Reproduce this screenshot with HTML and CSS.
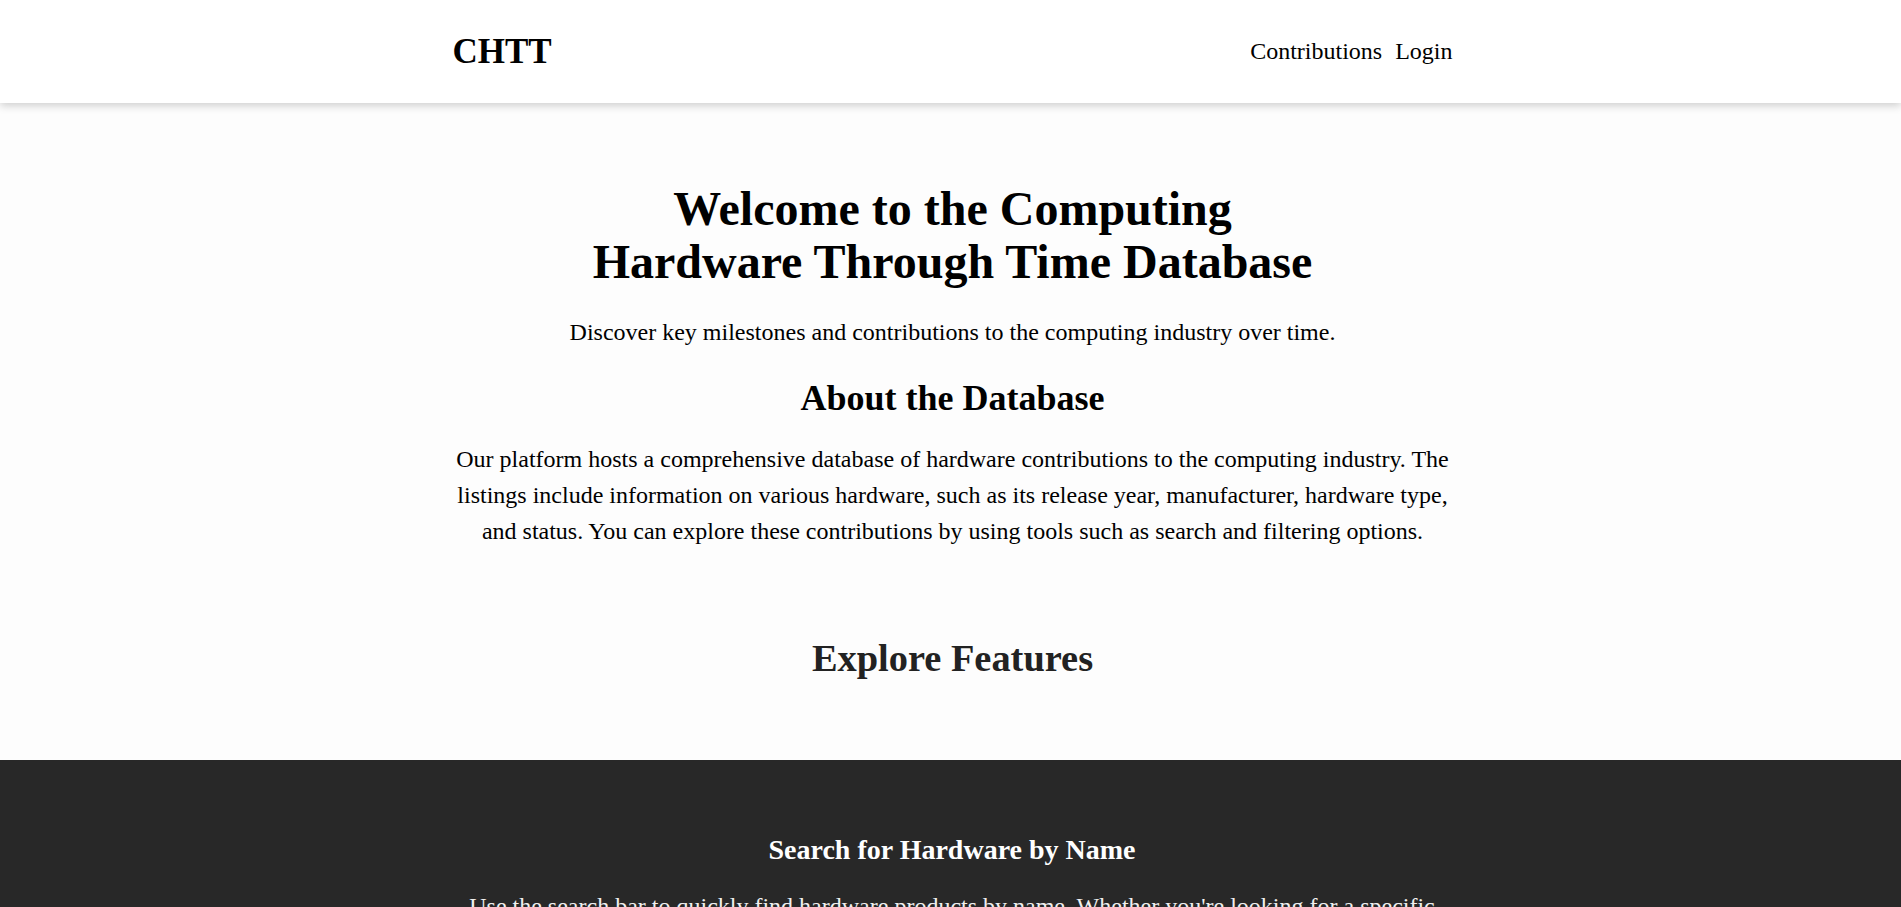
FILE: index.html
```html
<!DOCTYPE html>
<html lang="en">
<head>
<meta charset="utf-8">
<title>CHTT</title>
<link rel="stylesheet" href="styles.css">
</head>
<body>
<header class="site-header">
  <div class="container header-inner">
    <div class="logo">CHTT</div>
    <nav class="nav">
      <a href="#">Contributions</a>
      <a href="#">Login</a>
    </nav>
  </div>
</header>
<main>
  <section class="hero container">
    <h1 class="hero-title">Welcome to the Computing Hardware Through Time Database</h1>
    <p class="hero-sub">Discover key milestones and contributions to the computing industry over time.</p>
    <h2 class="about-title">About the Database</h2>
    <p class="about-text">Our platform hosts a comprehensive database of hardware contributions to the computing industry. The listings include information on various hardware, such as its release year, manufacturer, hardware type, and status. You can explore these contributions by using tools such as search and filtering options.</p>
    <h2 class="features-title">Explore Features</h2>
  </section>
  <section class="feature dark">
    <div class="container feature-inner">
      <h3 class="feature-title">Search for Hardware by Name</h3>
      <p class="feature-text">Use the search bar to quickly find hardware products by name. Whether you're looking for a specific processor, graphics card or storage device, the search will help you locate it in seconds.</p>
    </div>
  </section>
</main>
</body>
</html>
```
FILE: styles.css
```css
* { box-sizing: border-box; }
html, body {
  margin: 0;
  padding: 0;
}
body {
  font-family: "Liberation Serif", "Times New Roman", serif;
  background: #fdfdfd;
  color: #000;
}
.container {
  max-width: 1000px;
  margin: 0 auto;
}
.site-header {
  background: #fff;
  height: 103px;
  box-shadow: 0 3px 8px rgba(0, 0, 0, 0.18);
  position: relative;
  z-index: 2;
}
.header-inner {
  height: 100%;
  display: flex;
  align-items: center;
  justify-content: space-between;
  padding: 0 0 0 2px;
}
.logo {
  font-size: 35px;
  font-weight: bold;
}
.nav {
  display: flex;
  gap: 13px;
  margin-right: -2px;
}
.nav a {
  color: #000;
  text-decoration: none;
  font-size: 24px;
}
.hero {
  text-align: center;
  padding: 79px 0 80px 4px;
}
.hero-title {
  font-size: 48px;
  line-height: 53px;
  max-width: 760px;
  margin: 0 auto;
}
.hero-sub {
  font-size: 24px;
  line-height: 28px;
  margin: 30px 0 0;
}
.about-title {
  font-size: 36px;
  line-height: 41px;
  margin: 32px 0 0;
}
.about-text {
  font-size: 24px;
  line-height: 36px;
  margin: 22px 0 0;
}
.features-title {
  font-size: 38.4px;
  line-height: 44px;
  color: #222;
  margin: 87px 0 0;
}
.feature.dark {
  background: #282828;
  color: #fff;
  text-align: center;
  padding-top: 74px;
  padding-bottom: 60px;
}
.feature-inner {
  padding-left: 3px;
}
.feature-title {
  font-size: 28px;
  line-height: 32px;
  margin: 0;
}
.feature-text {
  font-size: 24px;
  line-height: 36px;
  margin: 22px 0 0;
  color: #f0f0f0;
}
```
